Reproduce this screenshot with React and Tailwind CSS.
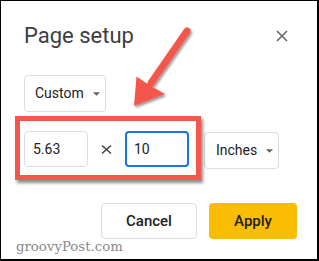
import React from "react";

function Caret() {
  return (
    <svg width="7" height="4" viewBox="0 0 7 4" className="shrink-0">
      <path d="M0 0.2 L7 0.2 L3.5 3.8 Z" fill="#5f6368" />
    </svg>
  );
}

export default function App() {
  const font = { fontFamily: "Roboto, 'Noto Sans', sans-serif" };
  return (
    <div
      className="relative w-[319px] h-[261px] bg-white border-black border-t border-l-[1.5px] border-r-2 border-b-2 overflow-hidden"
      style={font}
    >
      <div className="flex items-center justify-between pl-[23px] pr-[29px] pt-[21px]">
        <div className="text-[22px] leading-[28px] text-[#3c4043]">Page setup</div>
        <svg width="12" height="12" viewBox="0 0 12 12">
          <path d="M1 1 L11 11 M11 1 L1 11" stroke="#5f6368" strokeWidth="1.5" />
        </svg>
      </div>

      <div className="pl-[23px] mt-[25px]">
        <div className="flex items-center gap-[9px] w-[82px] h-[37px] border border-[#dadce0] rounded-[4px] pl-[10px] text-[14px] text-[#202124]">
          <span>Custom</span>
          <Caret />
        </div>
      </div>

      <div className="flex items-start pl-[23px] mt-[19px]">
        <div className="flex items-center w-[64px] h-[36px] border border-[#dadce0] rounded-[4px] pl-[8px] text-[14px] text-[#202124]">
          5.63
        </div>
        <div className="h-[36px] flex items-center mx-[13px]">
          <svg width="11" height="9" viewBox="0 0 11 9">
            <path d="M1 0.5 L10 8.5 M10 0.5 L1 8.5" stroke="#3c4043" strokeWidth="1.4" />
          </svg>
        </div>
        <div className="flex items-center w-[64px] h-[36px] border-2 border-[#1a73e8] rounded-[4px] pl-[7px] text-[14px] text-[#202124]">
          10
        </div>
        <div className="ml-[15px] flex items-center gap-[9px] w-[75px] h-[37px] mt-[1px] border border-[#dadce0] rounded-[4px] pl-[11px] text-[14px] text-[#202124]">
          <span>Inches</span>
          <Caret />
        </div>
      </div>

      <div className="flex justify-end gap-[12px] pr-[20px] mt-[34px]">
        <div className="flex items-center justify-center w-[96px] h-[36px] border border-[#dadce0] rounded-[4px] text-[15px] font-medium text-[#202124]">
          Cancel
        </div>
        <div className="flex items-center justify-center w-[88px] h-[36px] bg-[#fbbc04] rounded-[4px] text-[15px] font-medium text-[#202124]">
          Apply
        </div>
      </div>

      <div
        className="absolute left-[15px] top-[238px] text-[13.3px] leading-[16px] text-[#8a8a8a]"
        style={{ fontFamily: "'DejaVu Serif', serif" }}
      >
        groovyPost.com
      </div>

      <div className="absolute left-[14px] top-[115px] w-[186px] h-[64px] border-[5px] border-[#f4574b] shadow-[2px_3px_3px_rgba(0,0,0,0.45)] pointer-events-none" />

      <svg className="absolute left-0 top-0 pointer-events-none" width="319" height="261" viewBox="0 0 319 261">
        <defs>
          <filter id="sh" x="-20%" y="-20%" width="140%" height="140%">
            <feDropShadow dx="1.5" dy="2" stdDeviation="1.2" floodColor="#000" floodOpacity="0.4" />
          </filter>
        </defs>
        <g filter="url(#sh)">
          <line x1="186" y1="30" x2="150" y2="82" stroke="#f4574b" strokeWidth="7" strokeLinecap="round" />
          <path d="M133 105 L135.5 75.5 L148 84 L164 93 Z" fill="#f4574b" />
        </g>
      </svg>
    </div>
  );
}
